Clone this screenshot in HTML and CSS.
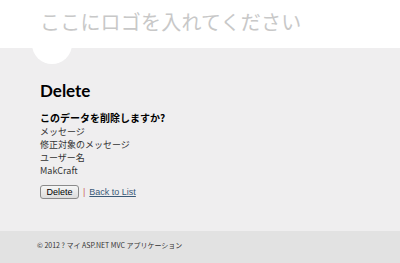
FILE: index.html
```html
<!DOCTYPE html>
<html lang="ja">
<head>
  <meta charset="UTF-8" />
  <title>Delete</title>
  <link rel="stylesheet" href="styles.css">
</head>
<body>
  <header class="site-header">
    <div class="header-dot"></div>
    <p class="site-title">ここにロゴを入れてください</p>
  </header>

  <div class="main">
    <h2 class="page-title">Delete</h2>
    <h3 class="confirm">このデータを削除しますか?</h3>
    <div class="fields">
      <div>メッセージ</div>
      <div>修正対象のメッセージ</div>
      <div>ユーザー名</div>
      <div>MakCraft</div>
    </div>
    <form class="actions">
      <button type="button" class="btn">Delete</button>
      <span class="sep">|</span>
      <a href="#" class="back">Back to List</a>
    </form>
  </div>

  <footer class="site-footer">
    <p>&copy; 2012 ? マイ ASP.NET MVC アプリケーション</p>
  </footer>
</body>
</html>
```
FILE: styles.css
```css
html, body {
  margin: 0;
  padding: 0;
}

body {
  font-family: "Noto Sans CJK JP", "Open Sans", sans-serif;
  color: #333;
  background-color: #efeeef;
  height: 263px;
  display: flex;
  flex-direction: column;
  overflow: hidden;
}

.site-header {
  position: relative;
  background-color: #fff;
  height: 48px;
}

.site-title {
  position: relative;
  margin: 0;
  padding: 8px 0 0 40px;
  font-size: 20px;
  line-height: 28px;
  color: #c8c8c8;
  letter-spacing: 0.2px;
}

.header-dot {
  position: absolute;
  left: 32px;
  top: 24px;
  width: 40px;
  height: 40px;
  border-radius: 50%;
  background-color: #fff;
}

.main {
  flex: 1;
  padding: 33px 40px 0;
}

.page-title {
  margin: 0;
  font-family: Lato, "Open Sans", sans-serif;
  font-size: 17px;
  line-height: 20px;
  font-weight: 700;
  color: #000;
}

.confirm {
  margin: 10px 0 0;
  font-size: 10px;
  line-height: 14px;
  font-weight: 700;
  color: #000;
}

.fields {
  font-size: 9px;
  line-height: 13px;
  color: #333;
}

.actions {
  margin-top: 8px;
  display: flex;
  align-items: center;
  gap: 4px;
  font-family: "Liberation Sans", sans-serif;
  font-size: 9px;
}

.btn {
  font-family: "Liberation Sans", sans-serif;
  font-size: 9px;
  height: 14px;
  width: 39px;
  padding: 0;
  border: 1px solid #8a8a8a;
  border-radius: 3px;
  background: linear-gradient(#f6f6f6, #dcdcdc);
  color: #000;
}

.sep {
  color: #c66;
}

.back {
  color: #3a5a78;
  text-decoration: underline;
}

.site-footer {
  background-color: #e2e2e2;
  height: 32px;
}

.site-footer p {
  margin: 0;
  padding: 9px 0 0 37px;
  font-size: 7px;
  line-height: 10px;
  color: #333;
}
```
